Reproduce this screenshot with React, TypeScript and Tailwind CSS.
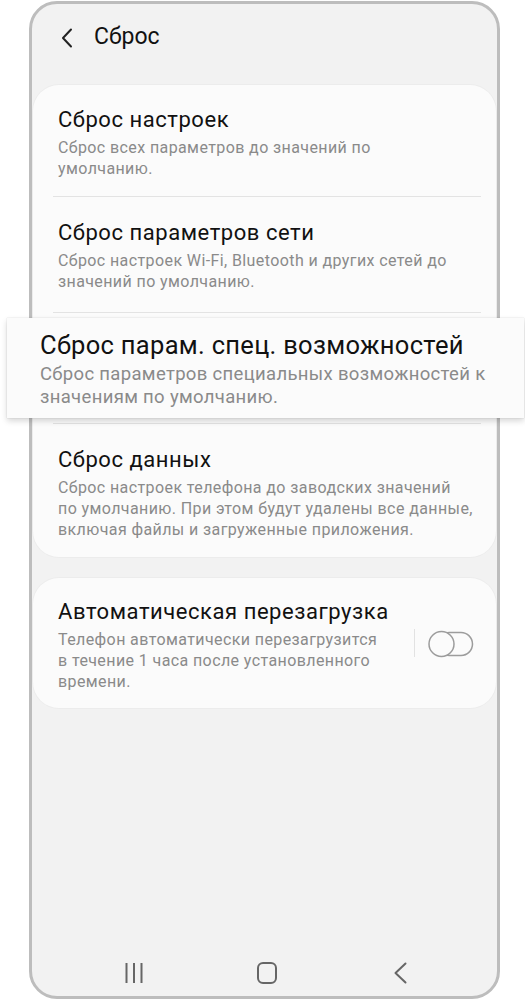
import React from "react";

const font = { fontFamily: "Roboto, 'Noto Sans', sans-serif" };

type Item = {
  title: string;
  lines: string[];
  pad: string;
};

const topItems: Item[] = [
  {
    title: "Сброс настроек",
    lines: ["Сброс всех параметров до значений по", "умолчанию."],
    pad: "pt-[21px] pb-[17px]",
  },
  {
    title: "Сброс параметров сети",
    lines: ["Сброс настроек Wi-Fi, Bluetooth и других сетей до", "значений по умолчанию."],
    pad: "pt-[22px] pb-[20px]",
  },
];

const Divider = () => <div className="ml-[20px] mr-[15px] h-px bg-[#e3e3e3]" />;

const Row = ({ item }: { item: Item }) => (
  <div className={`pl-[25px] pr-[20px] ${item.pad}`}>
    <p className="text-[22px] leading-[28px] tracking-[0.55px] text-[#111]">{item.title}</p>
    <p className="mt-[3px] text-[16px] leading-[21px] tracking-[0.4px] text-[#8a8a8a]">
      {item.lines.map((l, i) => (
        <span key={i} className="block whitespace-nowrap">
          {l}
        </span>
      ))}
    </p>
  </div>
);

const Toggle = () => (
  <svg width="46" height="28" viewBox="0 0 46 28" fill="none">
    <rect x="10" y="2.5" width="34.5" height="23" rx="11.5" stroke="#9c9c9c" strokeWidth="1.5" />
    <circle cx="13.5" cy="14" r="12.5" fill="#fbfbfb" stroke="#9c9c9c" strokeWidth="1.5" />
  </svg>
);

export default function App() {
  return (
    <div className="w-[525px] h-[1000px] bg-white overflow-hidden" style={font}>
      <div className="ml-[29px] mt-[1px] w-[471px] h-[998px] rounded-[28px] border-[3px] border-[#bdbdbd] bg-[#f2f2f2] flex flex-col">
        {/* header */}
        <div className="h-[67px] flex items-center">
          <svg className="ml-[29px]" width="12" height="20" viewBox="0 0 12 20" fill="none">
            <path d="M10 1.5 L2 10 L10 18.5" stroke="#222" strokeWidth="2" strokeLinecap="round" strokeLinejoin="round" />
          </svg>
          <span className="ml-[21px] text-[23px] text-[#111]">Сброс</span>
        </div>

        <div className="pt-[14px] flex flex-col gap-[21px]">
          <div className="mx-px rounded-[26px] bg-[#fbfbfb] shadow-[0_0_0_1px_rgba(0,0,0,0.025)]">
            {topItems.map((it) => (
              <React.Fragment key={it.title}>
                <Row item={it} />
                <Divider />
              </React.Fragment>
            ))}

            {/* highlighted row, pops out of the card */}
            <div className="relative z-10 my-[5px] -ml-[26px] -mr-[28px] h-[100px] bg-[#fbfbfb] pl-[33px] pt-[12px] shadow-[0_3px_6px_rgba(0,0,0,0.16),0_0_1px_rgba(0,0,0,0.2)]">
              <p className="text-[25.5px] leading-[30px] tracking-[0.3px] text-[#111]">Сброс парам. спец. возможностей</p>
              <p className="mt-[3px] text-[18.5px] leading-[23px] tracking-[0.33px] text-[#8a8a8a]">
                <span className="block whitespace-nowrap">Сброс параметров специальных возможностей к</span>
                <span className="block whitespace-nowrap">значениям по умолчанию.</span>
              </p>
            </div>

            <Divider />
            <Row
              item={{
                title: "Сброс данных",
                lines: [
                  "Сброс настроек телефона до заводских значений",
                  "по умолчанию. При этом будут удалены все данные,",
                  "включая файлы и загруженные приложения.",
                ],
                pad: "pt-[22px] pb-[17px]",
              }}
            />
          </div>

          <div className="mx-px rounded-[26px] bg-[#fbfbfb] shadow-[0_0_0_1px_rgba(0,0,0,0.025)] flex items-center">
            <div className="flex-1">
              <Row
                item={{
                  title: "Автоматическая перезагрузка",
                  lines: [
                    "Телефон автоматически перезагрузится",
                    "в течение 1 часа после установленного",
                    "времени.",
                  ],
                  pad: "pt-[20px] pb-[16px]",
                }}
              />
            </div>
            <div className="w-px h-[28px] bg-[#e2e2e2]" />
            <div className="ml-[13px] mr-[22px] mt-[1px]">
              <Toggle />
            </div>
          </div>
        </div>

        {/* navigation bar */}
        <div className="mt-auto h-[46px] flex items-center">
          <svg className="ml-[93px]" width="18" height="22" viewBox="0 0 18 22" fill="none">
            <path d="M1.5 1v20M9 1v20M16.5 1v20" stroke="#666" strokeWidth="2" />
          </svg>
          <svg className="ml-[114px]" width="20" height="22" viewBox="0 0 20 22" fill="none">
            <rect x="1" y="1" width="18" height="20" rx="5" stroke="#666" strokeWidth="2" />
          </svg>
          <svg className="ml-[117px]" width="13" height="22" viewBox="0 0 13 22" fill="none">
            <path d="M11.5 1.5 L1.5 11 L11.5 20.5" stroke="#666" strokeWidth="2" strokeLinecap="round" strokeLinejoin="round" />
          </svg>
        </div>
      </div>
    </div>
  );
}
